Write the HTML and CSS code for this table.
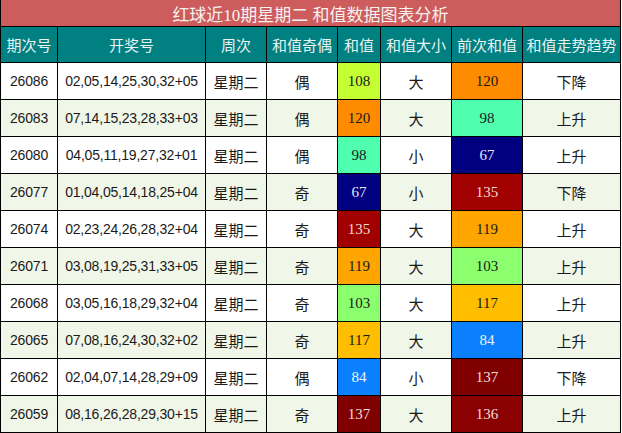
FILE: index.html
```html
<!DOCTYPE html>
<html lang="zh">
<head>
<meta charset="utf-8">
<title>红球近10期星期二 和值数据图表分析</title>
<link rel="stylesheet" href="styles.css">
</head>
<body>
<div class="board">
  <div class="title">红球近10期星期二 和值数据图表分析</div>
  <div class="th">期次号</div>
  <div class="th">开奖号</div>
  <div class="th">周次</div>
  <div class="th">和值奇偶</div>
  <div class="th">和值</div>
  <div class="th">和值大小</div>
  <div class="th">前次和值</div>
  <div class="th">和值走势趋势</div>

  <div class="td num">26086</div><div class="td num">02,05,14,25,30,32+05</div><div class="td cjk">星期二</div><div class="td cjk">偶</div><div class="td sum c108">108</div><div class="td cjk">大</div><div class="td sum c120">120</div><div class="td cjk">下降</div>

  <div class="td num alt">26083</div><div class="td num alt">07,14,15,23,28,33+03</div><div class="td cjk alt">星期二</div><div class="td cjk alt">偶</div><div class="td sum c120">120</div><div class="td cjk alt">大</div><div class="td sum c98">98</div><div class="td cjk alt">上升</div>

  <div class="td num">26080</div><div class="td num">04,05,11,19,27,32+01</div><div class="td cjk">星期二</div><div class="td cjk">偶</div><div class="td sum c98">98</div><div class="td cjk">小</div><div class="td sum c67">67</div><div class="td cjk">上升</div>

  <div class="td num alt">26077</div><div class="td num alt">01,04,05,14,18,25+04</div><div class="td cjk alt">星期二</div><div class="td cjk alt">奇</div><div class="td sum c67">67</div><div class="td cjk alt">小</div><div class="td sum c135">135</div><div class="td cjk alt">下降</div>

  <div class="td num">26074</div><div class="td num">02,23,24,26,28,32+04</div><div class="td cjk">星期二</div><div class="td cjk">奇</div><div class="td sum c135">135</div><div class="td cjk">大</div><div class="td sum c119">119</div><div class="td cjk">上升</div>

  <div class="td num alt">26071</div><div class="td num alt">03,08,19,25,31,33+05</div><div class="td cjk alt">星期二</div><div class="td cjk alt">奇</div><div class="td sum c119">119</div><div class="td cjk alt">大</div><div class="td sum c103">103</div><div class="td cjk alt">上升</div>

  <div class="td num">26068</div><div class="td num">03,05,16,18,29,32+04</div><div class="td cjk">星期二</div><div class="td cjk">奇</div><div class="td sum c103">103</div><div class="td cjk">大</div><div class="td sum c117">117</div><div class="td cjk">上升</div>

  <div class="td num alt">26065</div><div class="td num alt">07,08,16,24,30,32+02</div><div class="td cjk alt">星期二</div><div class="td cjk alt">奇</div><div class="td sum c117">117</div><div class="td cjk alt">大</div><div class="td sum c84">84</div><div class="td cjk alt">上升</div>

  <div class="td num">26062</div><div class="td num">02,04,07,14,28,29+09</div><div class="td cjk">星期二</div><div class="td cjk">偶</div><div class="td sum c84">84</div><div class="td cjk">小</div><div class="td sum c137">137</div><div class="td cjk">下降</div>

  <div class="td num alt">26059</div><div class="td num alt">08,16,26,28,29,30+15</div><div class="td cjk alt">星期二</div><div class="td cjk alt">奇</div><div class="td sum c137">137</div><div class="td cjk alt">大</div><div class="td sum c136">136</div><div class="td cjk alt">上升</div>
</div>
</body>
</html>
```

FILE: styles.css
```css
html, body {
  margin: 0;
  padding: 0;
  background: #ffffff;
}

.board {
  width: 619px;
  display: grid;
  grid-template-columns: 56px 147px 60px 70px 42px 70px 70px 97px;
  grid-template-rows: 26px 35px repeat(10, 36px);
  gap: 1px;
  padding: 0 1px 1px 1px;
  background: #000000;
}

.title {
  grid-column: 1 / -1;
  background: #cd5c5c;
  color: #f6f0f0;
  font-family: "Liberation Serif", "Noto Sans CJK SC", serif;
  font-size: 17px;
  display: flex;
  align-items: center;
  justify-content: center;
}

.th {
  background: #008080;
  color: #e9f3f3;
  font-family: "Noto Sans CJK SC", sans-serif;
  font-size: 15px;
  display: flex;
  align-items: center;
  justify-content: center;
}

.td {
  background: #ffffff;
  color: #1a1a1a;
  display: flex;
  align-items: center;
  justify-content: center;
  white-space: nowrap;
}

.td.alt {
  background: #f0f6e8;
}

.num {
  font-family: "Liberation Sans", sans-serif;
  font-size: 14px;
  letter-spacing: -0.2px;
}

.cjk {
  font-family: "Noto Sans CJK SC", sans-serif;
  font-size: 15px;
}

.sum {
  font-family: "Liberation Serif", serif;
  font-size: 15px;
}

.c108 { background: #c3ff33; }
.c120 { background: #ff8c00; }
.c98  { background: #4fffaf; }
.c67  { background: #000080; color: #e6e6f5; }
.c135 { background: #a00000; color: #f3dcdc; }
.c119 { background: #ffa500; }
.c103 { background: #8cff6e; }
.c117 { background: #ffbf00; }
.c84  { background: #0a80ff; color: #eef5ff; }
.c137 { background: #800000; color: #f0dcdc; }
.c136 { background: #8b0000; color: #f0dcdc; }
```
